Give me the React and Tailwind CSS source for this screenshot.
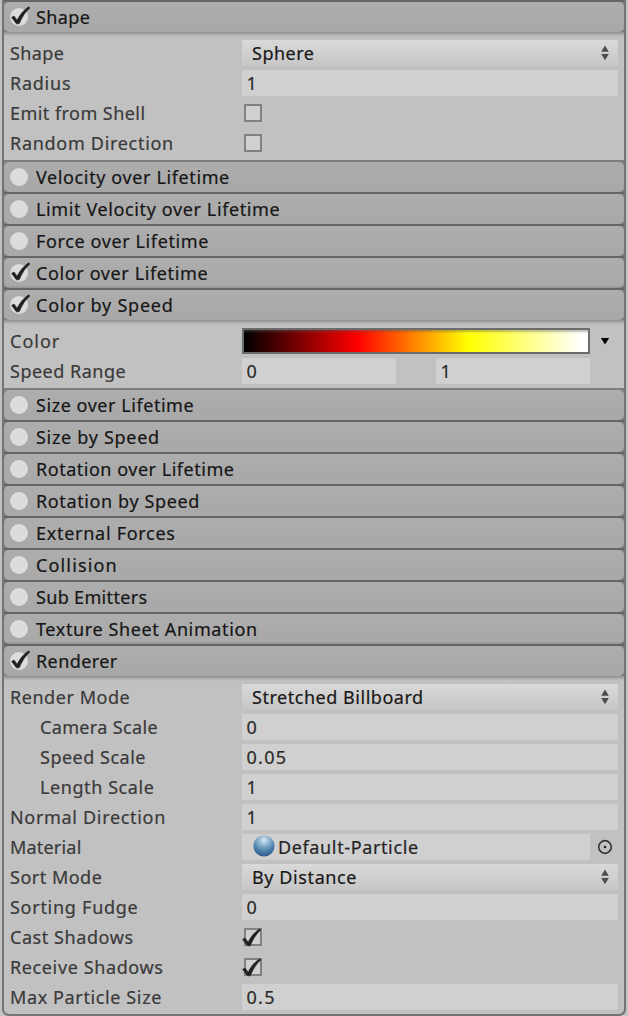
import React from "react";

function Check({ className = "" }) {
  return (
    <svg className={className} width="22" height="22" viewBox="0 0 22 22" fill="none">
      <path d="M2.6 12.4 L5 11 L8.2 15.2 C10.6 10 14.5 5 19.8 1.8 L20.8 3 C16 7.2 13 12.2 10.2 18.8 L7.4 18.8 Z" fill="#202020" stroke="#202020" strokeWidth="0.6" strokeLinejoin="round" />
    </svg>
  );
}

function Header({ label, on, open, first, track = "tracking-[0.62px]" }) {
  return (
    <div
      className={
        "relative h-8 border-t-2 bg-[#7c7c7c] " +
        (first ? "border-[#7e7e7e] " : "border-[#656565] ") +
        (open ? "z-10 shadow-[0_1px_3px_1px_rgba(0,0,0,0.28)]" : "")
      }
    >
      <div className="flex h-full items-center rounded-[5px] bg-linear-to-b from-[#adadad] to-[#a8a8a8] pl-[6px]">
        <span className="relative block size-[18px] shrink-0 rounded-full bg-[#dcdcdc]">
          {on && <Check className="absolute -top-[3px] -left-px" />}
        </span>
        <span className={"ml-2 whitespace-nowrap text-[#161616] " + track}>{label}</span>
      </div>
    </div>
  );
}

function Row({ label, indent, track = "tracking-[0.5px]", children }) {
  return (
    <div className="mb-1 flex h-[26px] items-center">
      <span className={"w-[238px] shrink-0 whitespace-nowrap text-[#3a3a3a] " + (indent ? "pl-9 " : "pl-[6px] ") + track}>
        {label}
      </span>
      {children}
    </div>
  );
}

function Field({ value, width = "w-[376px]" }) {
  return (
    <span className={"flex h-[26px] items-center rounded-[1px] bg-[#d0d0d0] pl-[4.5px] tracking-[1.3px] text-[#2b2b2b] " + width}>
      {value}
    </span>
  );
}

function Select({ value, track = "tracking-[0.5px]" }) {
  return (
    <span className="flex h-[26px] w-[376px] items-center justify-between rounded-[1px] bg-linear-to-b from-[#d9d9d9] to-[#c6c6c6] pr-2 pl-[10px] text-[#181818]">
      <span className={track}>{value}</span>
      <svg width="10" height="18" viewBox="0 0 10 18" fill="#4d4d4d">
        <path d="M5 1.5 L8.8 7.8 H1.2 Z M1.2 10 H8.8 L5 16.3 Z" />
      </svg>
    </span>
  );
}

function Box({ on }) {
  return (
    <span className="relative ml-[2px] block size-[18px] border-2 border-[#818181] bg-[#d0d0d0]">
      {on && <Check className="absolute -top-[3px] -left-[6px]" />}
    </span>
  );
}

export default function App() {
  return (
    <div className="h-[1016px] w-[628px] bg-[#c1c1c1] px-[2px] font-['Noto_Sans',sans-serif] text-[18px] leading-[26px] [-webkit-text-stroke:0.2px]">
      <div className="h-[1016px] overflow-hidden rounded-b-[7px] border-x-2 border-b-2 border-[#747474] bg-[#c1c1c1]">
        <Header label="Shape" on open track="tracking-[0.4px]" />
        <div className="pt-2">
          <Row label="Shape" track="tracking-[0.4px]"><Select value="Sphere" /></Row>
          <Row label="Radius" track="tracking-[0.75px]"><Field value="1" /></Row>
          <Row label="Emit from Shell" track="tracking-[0.45px]"><Box /></Row>
          <Row label="Random Direction" track="tracking-[0.7px]"><Box /></Row>
        </div>
        <Header label="Velocity over Lifetime" first />
        <Header label="Limit Velocity over Lifetime" />
        <Header label="Force over Lifetime" />
        <Header label="Color over Lifetime" on />
        <Header label="Color by Speed" on open track="tracking-[0.77px]" />
        <div className="pt-2">
          <Row label="Color" track="tracking-[1px]">
            <span className="h-[26px] w-[348px] border-2 border-[#6c6c6c] bg-[linear-gradient(to_right,#000_0%,#f00_33%,#ff0_65%,#fff_98%)] shadow-[inset_0_3px_2px_-1px_rgba(90,90,90,0.4)]" />
            <svg className="ml-[10px]" width="10" height="8" viewBox="0 0 10 8"><path d="M0.8 1 H9.2 L5 7.5 Z" fill="#000" /></svg>
          </Row>
          <Row label="Speed Range" track="tracking-[0.5px]">
            <Field value="0" width="w-[154px]" />
            <span className="w-10" />
            <Field value="1" width="w-[154px]" />
          </Row>
        </div>
        <Header label="Size over Lifetime" first track="tracking-[0.55px]" />
        <Header label="Size by Speed" track="tracking-[0.7px]" />
        <Header label="Rotation over Lifetime" track="tracking-[0.52px]" />
        <Header label="Rotation by Speed" />
        <Header label="External Forces" track="tracking-[0.72px]" />
        <Header label="Collision" track="tracking-[1.15px]" />
        <Header label="Sub Emitters" track="tracking-[0.33px]" />
        <Header label="Texture Sheet Animation" />
        <Header label="Renderer" on open track="tracking-[0.4px]" />
        <div className="pt-2">
          <Row label="Render Mode" track="tracking-[0.55px]"><Select value="Stretched Billboard" track="tracking-[0.53px]" /></Row>
          <Row label="Camera Scale" indent track="tracking-[0.35px]"><Field value="0" /></Row>
          <Row label="Speed Scale" indent><Field value="0.05" /></Row>
          <Row label="Length Scale" indent track="tracking-[0.58px]"><Field value="1" /></Row>
          <Row label="Normal Direction" track="tracking-[0.68px]"><Field value="1" /></Row>
          <Row label="Material" track="tracking-[0.2px]">
            <span className="flex h-[26px] w-[348px] items-center rounded-[1px] bg-[#d0d0d0] pl-[11px] text-[#242424]">
              <svg className="mr-[3px] mb-[2px]" width="22" height="22" viewBox="0 0 22 22">
                <defs>
                  <radialGradient id="ball" cx="0.5" cy="0.22" r="0.75">
                    <stop offset="0" stopColor="#dcebf2" />
                    <stop offset="0.3" stopColor="#94b8d2" />
                    <stop offset="0.65" stopColor="#5586b2" />
                    <stop offset="1" stopColor="#345e8e" />
                  </radialGradient>
                </defs>
                <circle cx="11" cy="11" r="10.6" fill="url(#ball)" />
              </svg>
              <span className="tracking-[0.63px]">Default-Particle</span>
            </span>
            <svg className="ml-[7px]" width="16" height="16" viewBox="0 0 16 16" fill="none">
              <circle cx="8" cy="8" r="6.3" stroke="#383838" strokeWidth="1.7" />
              <circle cx="8" cy="8" r="1.3" fill="#222" />
            </svg>
          </Row>
          <Row label="Sort Mode"><Select value="By Distance" track="tracking-[0.6px]" /></Row>
          <Row label="Sorting Fudge" track="tracking-[0.73px]"><Field value="0" /></Row>
          <Row label="Cast Shadows" track="tracking-[0.57px]"><Box on /></Row>
          <Row label="Receive Shadows" track="tracking-[0.62px]"><Box on /></Row>
          <Row label="Max Particle Size" track="tracking-[0.62px]"><Field value="0.5" /></Row>
        </div>
      </div>
    </div>
  );
}
